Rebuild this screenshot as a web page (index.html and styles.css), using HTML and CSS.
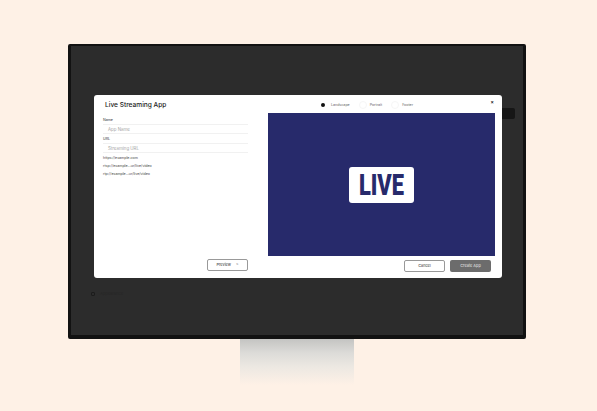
FILE: index.html
```html
<!DOCTYPE html>
<html lang="en">
<head>
<meta charset="utf-8">
<title>Live Streaming App</title>
<link rel="stylesheet" href="styles.css">
</head>
<body>
<div class="stage">
  <div class="monitor">
    <div class="screen">
      <span class="side-btn"></span>
      <section class="modal">
        <div class="left">
          <h1 class="title">Live Streaming App</h1>
          <label class="label">Name</label>
          <div class="input">App Name</div>
          <label class="label url-label">URL</label>
          <div class="input">Streaming URL</div>
          <ul class="urls">
            <li>https://example.com</li>
            <li>rtsp://example...ur/live/video</li>
            <li>rtp://example...ur/live/video</li>
          </ul>
          <div class="left-foot">
            <button class="btn preview-btn">Preview <span class="chev">&gt;</span></button>
          </div>
        </div>
        <div class="right">
          <div class="tabs">
            <span class="tab"><i class="dot on"></i>Landscape</span>
            <span class="tab"><i class="dot"></i>Portrait</span>
            <span class="tab"><i class="dot"></i>Footer</span>
          </div>
          <span class="close">×</span>
          <div class="preview">
            <div class="live"><span class="live-text">LIVE</span></div>
          </div>
          <div class="actions">
            <button class="btn">Cancel</button>
            <button class="btn primary">Create App</button>
          </div>
        </div>
      </section>
      <div class="dim-row"><i class="dim-icon"></i>Appearance</div>
    </div>
  </div>
  <div class="stand"></div>
</div>
</body>
</html>
```

FILE: styles.css
```css
* { box-sizing: border-box; }
html, body { margin: 0; height: 100%; }
body {
  background: #fef1e6;
  font-family: "Inter", "Liberation Sans", sans-serif;
  overflow: hidden;
}
.stage {
  width: 597px;
  height: 411px;
  padding: 44px 0 0 68px;
  display: flex;
  flex-direction: column;
  align-items: flex-start;
}
.monitor {
  width: 458px;
  height: 295px;
  background: #2c2c2c;
  border: solid #121212;
  border-width: 2px 3px 4px 3px;
  border-radius: 2px;
}
.screen {
  position: relative;
  height: 100%;
  padding: 49px 0 0 23px;
}
.side-btn {
  position: absolute;
  left: 425px;
  top: 62px;
  width: 19px;
  height: 11px;
  background: #161616;
  border-radius: 2px;
}
.modal {
  position: relative;
  display: flex;
  width: 408px;
  height: 183px;
  background: #fff;
  border-radius: 3px;
}
.left {
  width: 174px;
  height: 100%;
  padding: 6px 20px 0 9px;
  display: flex;
  flex-direction: column;
}
.title {
  margin: 0 0 0 2px;
  font-size: 6.6px;
  line-height: 9px;
  font-weight: 500;
  color: #222;
}
.label {
  display: block;
  margin: 8px 0 1px;
  font-size: 3.6px;
  line-height: 5px;
  color: #333;
}
.url-label { margin-top: 3px; }
.input {
  height: 10px;
  padding-left: 5px;
  font-size: 4.4px;
  line-height: 9px;
  color: #a6a6a6;
  border-top: 1px solid #f1f1f1;
  border-bottom: 1px solid #f1f1f1;
}
.urls {
  list-style: none;
  margin: 1px 0 0;
  padding: 0;
  font-size: 3.6px;
  line-height: 8px;
  color: #444;
}
.left-foot {
  margin-top: auto;
  padding-bottom: 7px;
  display: flex;
  justify-content: flex-end;
}
.btn {
  width: 41px;
  height: 12px;
  padding: 0;
  background: #fff;
  color: #555;
  border: 1px solid #999;
  border-radius: 2px;
  font: 500 3.8px/1 "Inter", "Liberation Sans", sans-serif;
}
.chev { margin-left: 4px; color: #777; }
.right {
  position: relative;
  flex: 1;
  display: flex;
  flex-direction: column;
  padding-right: 7px;
}
.tabs {
  height: 18px;
  padding: 1px 0 0 53px;
  display: flex;
  align-items: center;
  gap: 9px;
  font-size: 3.6px;
  color: #666;
}
.tab { display: flex; align-items: center; gap: 3px; }
.dot {
  width: 8px;
  height: 8px;
  border-radius: 50%;
  border: 1px solid #f6f6f6;
}
.dot.on {
  width: 4px;
  height: 4px;
  margin-right: 3px;
  border: 0;
  background: #111;
}
.close {
  position: absolute;
  right: 8px;
  top: 5px;
  font-size: 5px;
  line-height: 5px;
  font-weight: 700;
  color: #222;
}
.preview {
  height: 143px;
  background: #272a6b;
  display: flex;
  align-items: center;
  justify-content: center;
}
.live {
  width: 65px;
  height: 36px;
  margin-left: -1px;
  background: #fff;
  border-radius: 3px;
  display: flex;
  align-items: center;
  justify-content: center;
}
.live-text {
  display: inline-block;
  color: #272a6b;
  font: 900 29.5px/36px "Roboto", "Liberation Sans", sans-serif;
  transform: scaleX(0.74);
}
.actions {
  margin-top: 4px;
  padding-right: 4px;
  display: flex;
  justify-content: flex-end;
  gap: 5px;
}
.btn.primary {
  background: #6c6c6c;
  color: #ddd;
  border: 0;
}
.dim-row {
  display: flex;
  align-items: center;
  gap: 5px;
  margin: 13px 0 0 -3px;
  font-size: 4px;
  line-height: 6px;
  color: #262626;
}
.dim-icon {
  width: 4px;
  height: 4px;
  border: 1px solid #1c1c1c;
  border-radius: 1px;
}
.stand {
  width: 114px;
  height: 46px;
  margin-left: 172px;
  background: linear-gradient(#c4c4c2 0%, #dcdbd8 30%, #ece8e2 60%, #fef1e6 100%);
}
```
